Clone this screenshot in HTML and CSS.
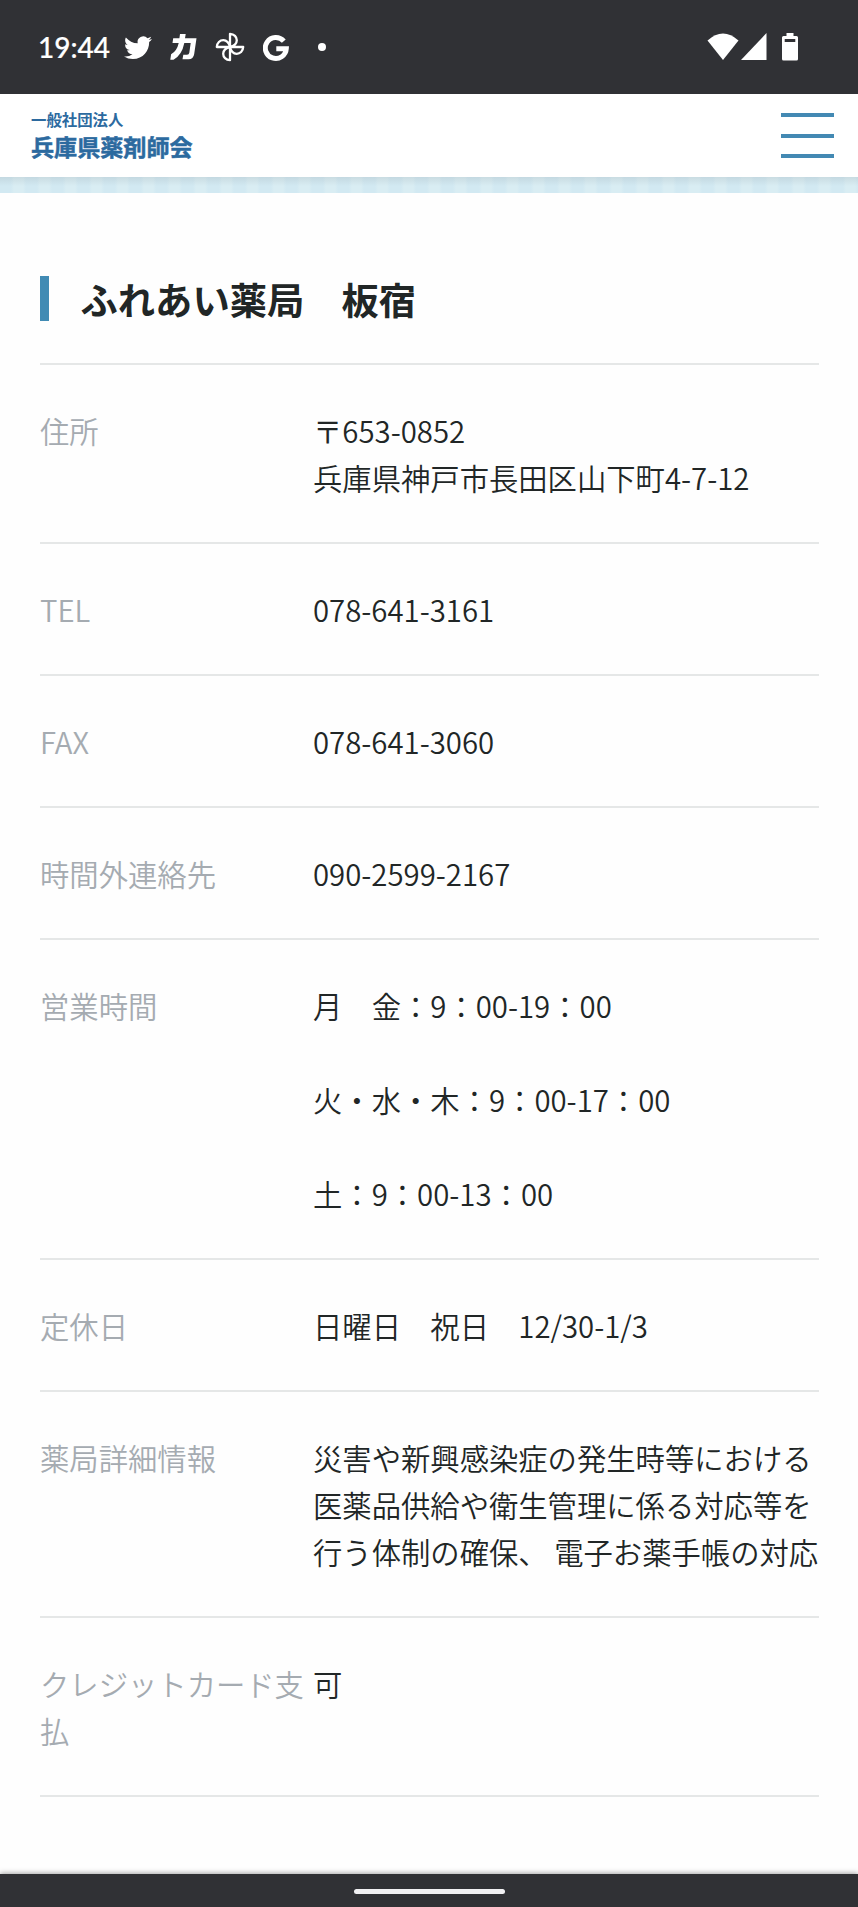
FILE: index.html
```html
<!DOCTYPE html>
<html lang="ja">
<head>
<meta charset="utf-8">
<title>ふれあい薬局 板宿</title>
<link rel="stylesheet" href="styles.css">
</head>
<body>
<div class="status">
  <span class="clock">19:44</span>
  <svg class="ic-bird" width="28" height="24" viewBox="0 2.5 24 19.5"><path fill="#fff" d="M23.95 4.57a10 10 0 0 1-2.82.77 4.96 4.96 0 0 0 2.16-2.72c-.95.55-2 .96-3.13 1.18a4.92 4.92 0 0 0-8.38 4.48C7.69 8.1 4.07 6.13 1.64 3.16a4.82 4.82 0 0 0-.67 2.48c0 1.7.87 3.21 2.19 4.1a4.9 4.9 0 0 1-2.23-.62v.06a4.92 4.92 0 0 0 3.95 4.83 5 5 0 0 1-2.21.08 4.94 4.94 0 0 0 4.6 3.42A9.87 9.87 0 0 1 0 19.54a13.99 13.99 0 0 0 7.55 2.21c9.05 0 14-7.5 14-13.98 0-.21 0-.42-.02-.63a9.94 9.94 0 0 0 2.42-2.57z"/></svg>
  <svg class="ic-ka" width="28" height="26" viewBox="0 0 28 26"><path fill="#fff" d="M10 0H15.700L15 4.300H26.500L24.200 20Q23.400 25.300 18.500 25.300H12.500L13.300 20.800H17Q19 20.800 19.300 18.800L20.700 9H14.300Q12 21 3.500 25.800H0.300L1.100 20.300Q7 17 8.700 9H2.500L3.200 4.300H9.400Z"/></svg>
  <svg class="ic-fan" width="30" height="30" viewBox="0 0 30 30"><g fill="none" stroke="#fff" stroke-width="2.300" stroke-linejoin="round"><path d="M15 15V1.800C19.200 2 21.800 5 21.800 8.300C21.800 11.500 19 14.500 15 15Z"/><path d="M15 15V1.800C19.200 2 21.800 5 21.800 8.300C21.800 11.500 19 14.500 15 15Z" transform="rotate(90 15 15)"/><path d="M15 15V1.800C19.200 2 21.800 5 21.800 8.300C21.800 11.500 19 14.500 15 15Z" transform="rotate(180 15 15)"/><path d="M15 15V1.800C19.200 2 21.800 5 21.800 8.300C21.800 11.500 19 14.500 15 15Z" transform="rotate(270 15 15)"/></g></svg>
  <svg class="ic-g" width="26" height="27" viewBox="0 0 26 27"><path fill="none" stroke="#fff" stroke-width="5" d="M20.800 6.200A10.500 10.500 0 1 0 23.300 13.700H13.300"/></svg>
  <span class="dot"></span>
  <svg class="ic-wifi" width="32" height="27" viewBox="0 0 32 27"><path fill="#fff" d="M0.500 7.500Q16-6.500 31.500 7.500L16 27Z"/></svg>
  <svg class="ic-sig" width="26" height="27" viewBox="0 0 26 27"><path fill="#fff" d="M25.500 0V27H0Z"/></svg>
  <svg class="ic-bat" width="16" height="28" viewBox="0 0 16 28"><path fill="#fff" fill-rule="evenodd" d="M4.500 0h7v3H14.500Q16 3 16 4.500V26Q16 27.500 14.500 27.500H1.500Q0 27.500 0 26V4.500Q0 3 1.500 3H4.500ZM2.700 6V9H13.300V6Z"/></svg>
</div>
<header class="header">
  <div class="logo"><span class="org">一般社団法人</span><span class="name">兵庫県薬剤師会</span></div>
  <div class="menu"><i></i><i></i><i></i></div>
</header>
<div class="strip"></div>
<main class="main">
  <h1 class="title">ふれあい薬局　板宿</h1>
  <dl class="list">
    <div class="row"><dt>住所</dt><dd>〒653-0852<br>兵庫県神戸市長田区山下町4-7-12</dd></div>
    <div class="row"><dt>TEL</dt><dd>078-641-3161</dd></div>
    <div class="row"><dt>FAX</dt><dd>078-641-3060</dd></div>
    <div class="row"><dt>時間外連絡先</dt><dd>090-2599-2167</dd></div>
    <div class="row"><dt>営業時間</dt><dd>月　金：9：00-19：00<br><br>火・水・木：9：00-17：00<br><br>土：9：00-13：00</dd></div>
    <div class="row"><dt>定休日</dt><dd>日曜日　祝日　12/30-1/3</dd></div>
    <div class="row"><dt>薬局詳細情報</dt><dd>災害や新興感染症の発生時等における<br>医薬品供給や衛生管理に係る対応等を<br>行う体制の確保、 電子お薬手帳の対応</dd></div>
    <div class="row"><dt>クレジットカード支<br>払</dt><dd>可</dd></div>
  </dl>
</main>
<div class="navbar"><span class="pill"></span></div>
</body>
</html>
```
FILE: styles.css
```css
* { box-sizing: border-box; }
body {
  margin: 0;
  height: 1907px;
  display: flex;
  flex-direction: column;
  overflow: hidden;
  background: #fefefe;
  color: #212626;
  font-family: "Noto Sans CJK JP", sans-serif;
}
.status {
  flex: none;
  height: 94px;
  padding: 0 60px 0 38px;
  display: flex;
  align-items: center;
  background: #303135;
}
.status svg { flex: none; display: block; }
.clock {
  width: 86px;
  color: #fff;
  font: 500 28px/30px Lato, sans-serif;
  -webkit-text-stroke: .2px #fff;
}
.ic-bird { margin-top: 2px; }
.ic-ka { margin-left: 18px; }
.ic-fan { margin-left: 17px; }
.ic-g { margin-left: 18px; margin-top: 2px; }
.dot {
  width: 8px;
  height: 8px;
  margin-left: 29px;
  border-radius: 50%;
  background: #fff;
}
.ic-wifi { margin-left: auto; margin-bottom: 2px; }
.ic-sig { margin-left: 2px; margin-bottom: 1px; }
.ic-bat { margin-left: 15px; }
.header {
  flex: none;
  height: 83px;
  padding: 0 24px 0 31px;
  display: flex;
  justify-content: space-between;
  align-items: flex-start;
  background: #fff;
}
.logo {
  display: flex;
  flex-direction: column;
  padding-top: 16px;
  color: #2c6a9f;
  font-weight: 700;
  white-space: nowrap;
}
.org { font-size: 15.4px; line-height: 19px; }
.name { font-size: 23.1px; line-height: 30px; margin-top: 2px; -webkit-text-stroke: .5px #2c6a9f; }
.menu { width: 53px; padding-top: 19px; display: flex; flex-direction: column; gap: 16.500px; }
.menu i { height: 4px; background: #4389b3; }
.strip {
  flex: none;
  height: 16px;
  background:
    linear-gradient(rgba(120, 130, 135, .16), rgba(120, 130, 135, 0) 9px),
    repeating-linear-gradient(90deg, #d2e9f2 0 11px, #d9edf3 14px 23px, #d2e9f2 26px);
}
.main { flex: 1; padding: 83px 39px 0 40px; }
.title {
  margin: 0;
  height: 45px;
  padding-left: 31.500px;
  border-left: 9px solid #418bb4;
  font-size: 37.3px;
  line-height: 46px;
  font-weight: 700;
}
.list {
  margin: 42px 0 0;
  border-top: 2px solid #e5e7e7;
  font-family: "Noto Sans CJK JP DemiLight", "Noto Sans CJK JP", sans-serif;
  font-size: 29.330px;
  font-weight: 350;
  line-height: 46.900px;
}
.row {
  display: grid;
  grid-template-columns: 273px 1fr;
  padding: 42px 0 41.200px;
  border-bottom: 2px solid #e5e7e7;
  white-space: nowrap;
}
.row dt { color: #a5abb1; }
.row dd { margin: 0; }
.navbar {
  flex: none;
  height: 33px;
  display: flex;
  justify-content: center;
  padding-top: 15px;
  background: #303135;
  box-shadow: 0 -1px 5px rgba(0, 0, 0, .35);
}
.pill { width: 151px; height: 5px; border-radius: 3px; background: #f0f0f2; }
```
